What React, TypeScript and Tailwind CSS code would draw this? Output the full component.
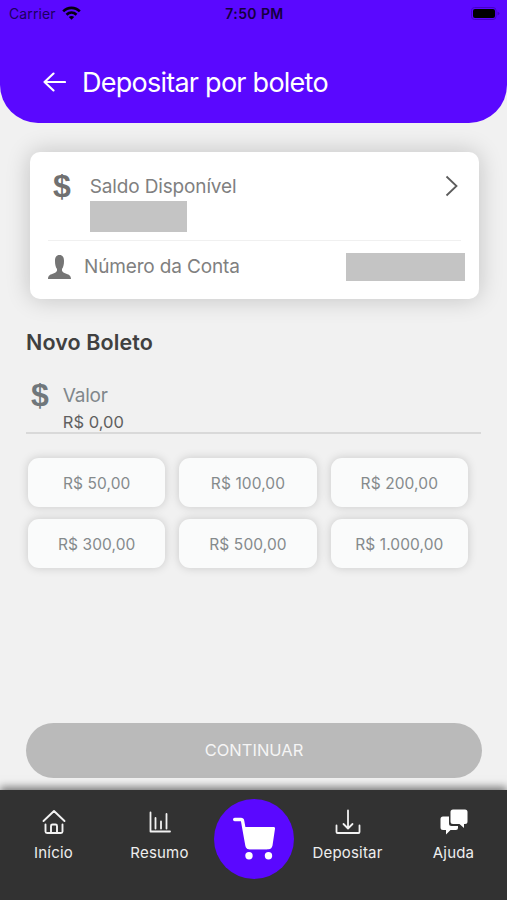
import type { ReactNode } from "react";

const amounts = ["R$ 50,00", "R$ 100,00", "R$ 200,00", "R$ 300,00", "R$ 500,00", "R$ 1.000,00"];

function StatusBar() {
  return (
    <div className="grid h-7 grid-cols-3 items-center pr-[7px] pl-[9px] text-[14px] leading-none text-[#1c0060]">
      <div className="flex items-center gap-[6px]">
        <span className="tracking-[0.1px]">Carrier</span>
        <svg className="mb-[2px] h-[14px] w-[19px]" viewBox="0 0 19 14" fill="none" stroke="#05000f" strokeWidth="2.6">
          <path d="M1.2 5.4C5.8 .7 13.2 .7 17.8 5.4" />
          <path d="M4.5 8.7c2.9-2.8 7.1-2.8 10 0" />
          <path d="M9.5 13.8 6.8 11c1.5-1.5 3.9-1.5 5.4 0z" fill="#05000f" stroke="none" />
        </svg>
      </div>
      <span className="text-center font-semibold tracking-[0.4px] whitespace-nowrap text-[#14003f]">7:50 PM</span>
      <svg className="mb-[2px] h-[13px] w-[29px] justify-self-end" viewBox="0 0 29 13">
        <rect x=".5" y=".5" width="24.5" height="12" rx="3" fill="none" stroke="#4600c8" />
        <rect x="2" y="2" width="22" height="9" rx="2" fill="#000" />
        <path d="M26.5 4.5v4q2-.8 2-2t-2-2" fill="#4600c8" />
      </svg>
    </div>
  );
}

function Header() {
  return (
    <header className="h-[123px] shrink-0 rounded-b-[38px] bg-[#5a08ff]">
      <StatusBar />
      <div className="flex h-[109px] items-center pl-[43px]">
        <svg className="mb-px h-[20px] w-[23px]" viewBox="0 0 23 20" fill="none" stroke="#fff" strokeWidth="2.1" strokeLinecap="round" strokeLinejoin="round">
          <path d="M22 10H1.5M10.5 1.5 1.5 10l9 8.5" />
        </svg>
        <h1 className="ml-4 pt-[2px] text-[27px] tracking-[-0.75px] whitespace-nowrap text-white">Depositar por boleto</h1>
      </div>
    </header>
  );
}

function Dollar({ className }: { className: string }) {
  return <span className={`font-[Liberation_Sans] text-[32px] leading-none font-bold ${className}`}>$</span>;
}

function AccountCard() {
  return (
    <section className="mt-[29px] mr-7 ml-[30px] h-[147px] shrink-0 rounded-[10px] bg-white px-[18px] shadow-[0_0_24px_rgba(0,0,0,0.2)]">
      <div className="flex h-[89px] items-start border-b border-[#f0f0f0]">
        <Dollar className="mt-[18px] ml-[5px] text-[#707070]" />
        <div className="ml-[19px] pt-[22px]">
          <p className="text-[19px] leading-[26px] tracking-[-0.15px] text-[#808080]">Saldo Disponível</p>
          <div className="mt-px h-[31px] w-[97px] bg-[#c4c4c4]" />
        </div>
        <svg className="mt-[23px] mr-[2px] ml-auto h-[22px] w-[14px]" viewBox="0 0 14 22" fill="none" stroke="#5c5c5c" strokeWidth="1.8">
          <path d="m1.5 1.5 10 9.500-10 9.500" />
        </svg>
      </div>
      <div className="-mr-[4px] flex h-[52px] items-center">
        <svg className="h-[24px] w-[23px]" viewBox="0 0 23 24" fill="#757575">
          <path d="M11.5 0C8.2 0 7 2.500 7 6c0 3.500.6 6 2 8 .4 2.200-.6 3.200-3 4.200C2.500 19.500 0 20 0 24h23c0-4-2.500-4.500-6-5.800-2.400-1-3.400-2-3-4.200 1.400-2 2-4.500 2-8 0-3.500-1.200-6-4.500-6Z" />
        </svg>
        <p className="ml-[13px] text-[19px] tracking-[-0.15px] text-[#808080]">Número da Conta</p>
        <div className="ml-auto h-7 w-[119px] bg-[#c4c4c4]" />
      </div>
    </section>
  );
}

function Bill() {
  return (
    <section className="px-[26px]">
      <h2 className="mt-[29px] text-[21.5px] leading-[29px] font-semibold tracking-[0.1px] text-[#404040]">Novo Boleto</h2>
      <div className="mt-5 flex h-[57px] items-start border-b-2 border-[#d9d9d9]">
        <Dollar className="mt-[2px] ml-[5px] text-[#70777b]" />
        <div className="ml-[14px] pt-[7px]">
          <p className="text-[19px] leading-6 tracking-[-0.2px] text-[#80878b]">Valor</p>
          <p className="mt-[2px] text-[16.5px] leading-6 text-[#606060]">R$ 0,00</p>
        </div>
      </div>
      <div className="mt-6 grid grid-cols-3 gap-x-[14px] gap-y-3 pr-[13px] pl-[2px]">
        {amounts.map((amount) => (
          <button
            key={amount}
            className="h-[49px] rounded-[11px] bg-[#fafbfb] pt-[2px] text-[15.5px] tracking-[0.1px] text-[#858a8c] shadow-[0_0_10px_rgba(0,0,0,0.17)]"
          >
            {amount}
          </button>
        ))}
      </div>
    </section>
  );
}

function Tab({ label, icon, className }: { label: string; icon: ReactNode; className: string }) {
  return (
    <div className={`flex flex-col items-center pt-[18px] text-[15px] leading-5 tracking-[0.2px] text-[#eee] ${className}`}>
      <div className="flex h-[28px] items-center">{icon}</div>
      <span className="mt-[7px]">{label}</span>
    </div>
  );
}

function TabBar() {
  return (
    <nav className="flex h-[110px] shrink-0 bg-[#323232] shadow-[0_-3px_8px_rgba(0,0,0,0.5)]">
      <Tab
        label="Início"
        className="w-[107px]"
        icon={
          <svg width="24" height="26" viewBox="0 0 24 26" fill="none" stroke="#f2f2f2" strokeWidth="1.9" strokeLinecap="round" strokeLinejoin="round">
            <path d="M1.5 12 12 2l10.500 10M3.500 15.500v7q0 1.500 1.500 1.500h14q1.500 0 1.500-1.500v-7M9 24v-7q0-1.500 1.500-1.500h3q1.500 0 1.500 1.500v7" />
          </svg>
        }
      />
      <Tab
        label="Resumo"
        className="w-[105px]"
        icon={
          <svg width="22" height="22" viewBox="0 0 22 22" fill="none" stroke="#f2f2f2" strokeWidth="1.8" strokeLinecap="round" strokeLinejoin="round">
            <path d="M1.5 1.5v19H21M6.5 7v10.500M12 10.500v7M17.500 3v14.500" />
          </svg>
        }
      />
      <div className="mt-[9px] ml-[2px] flex size-20 items-center justify-center rounded-full bg-[#5a08ff]">
        <svg width="44" height="44" viewBox="0 0 44 44" fill="#fff">
          <path d="M2.7 2.5H9q1.300 0 1.600 1.500L15 28.500q.4 2 2 2h18" fill="none" stroke="#fff" strokeWidth="3.4" strokeLinecap="round" />
          <path d="M11.5 10h30q1.800 0 1.500 1.800l-2.500 16.700q-.7 3.700-4 3.700H17.500q-2.500 0-3-2.500Z" />
          <circle cx="17" cy="38.7" r="3.7" />
          <circle cx="36.5" cy="38.7" r="3.7" />
        </svg>
      </div>
      <Tab
        label="Depositar"
        className="w-[107px]"
        icon={
          <svg width="26" height="26" viewBox="0 0 26 26" fill="none" stroke="#f2f2f2" strokeWidth="1.8" strokeLinecap="round" strokeLinejoin="round">
            <path d="M13 1.5V19M8.500 15l4.500 4.500 4.500-4.500M1.500 16.500v6.500q0 1 1 1h21q1 0 1-1v-6.500" />
          </svg>
        }
      />
      <Tab
        label="Ajuda"
        className="w-[105px]"
        icon={
          <svg width="28" height="26" viewBox="0 0 28 26" fill="#fff">
            <path d="M3 7.500h6v7q0 2.500 2.500 2.500H18v2q0 2-2 2h-5.500L6 25.500V21H3q-2.500 0-2.500-2.500V10Q.5 7.500 3 7.500Z" />
            <path d="M13 .5h12q2.500 0 2.500 2.500v9.500q0 2.500-2.500 2.500h-1v4l-4.500-4H13q-2.500 0-2.500-2.500V3Q10.500.5 13 .5Z" />
          </svg>
        }
      />
    </nav>
  );
}

export default function App() {
  return (
    <div className="flex h-[900px] w-[507px] flex-col overflow-hidden bg-[#f1f1f1] font-[Inter,sans-serif]">
      <Header />
      <AccountCard />
      <Bill />
      <button className="mt-auto mr-[25px] mb-3 ml-[26px] h-[55px] shrink-0 rounded-full bg-[#bababa] text-[16.5px] text-[#f5f5f5]">
        CONTINUAR
      </button>
      <TabBar />
    </div>
  );
}
